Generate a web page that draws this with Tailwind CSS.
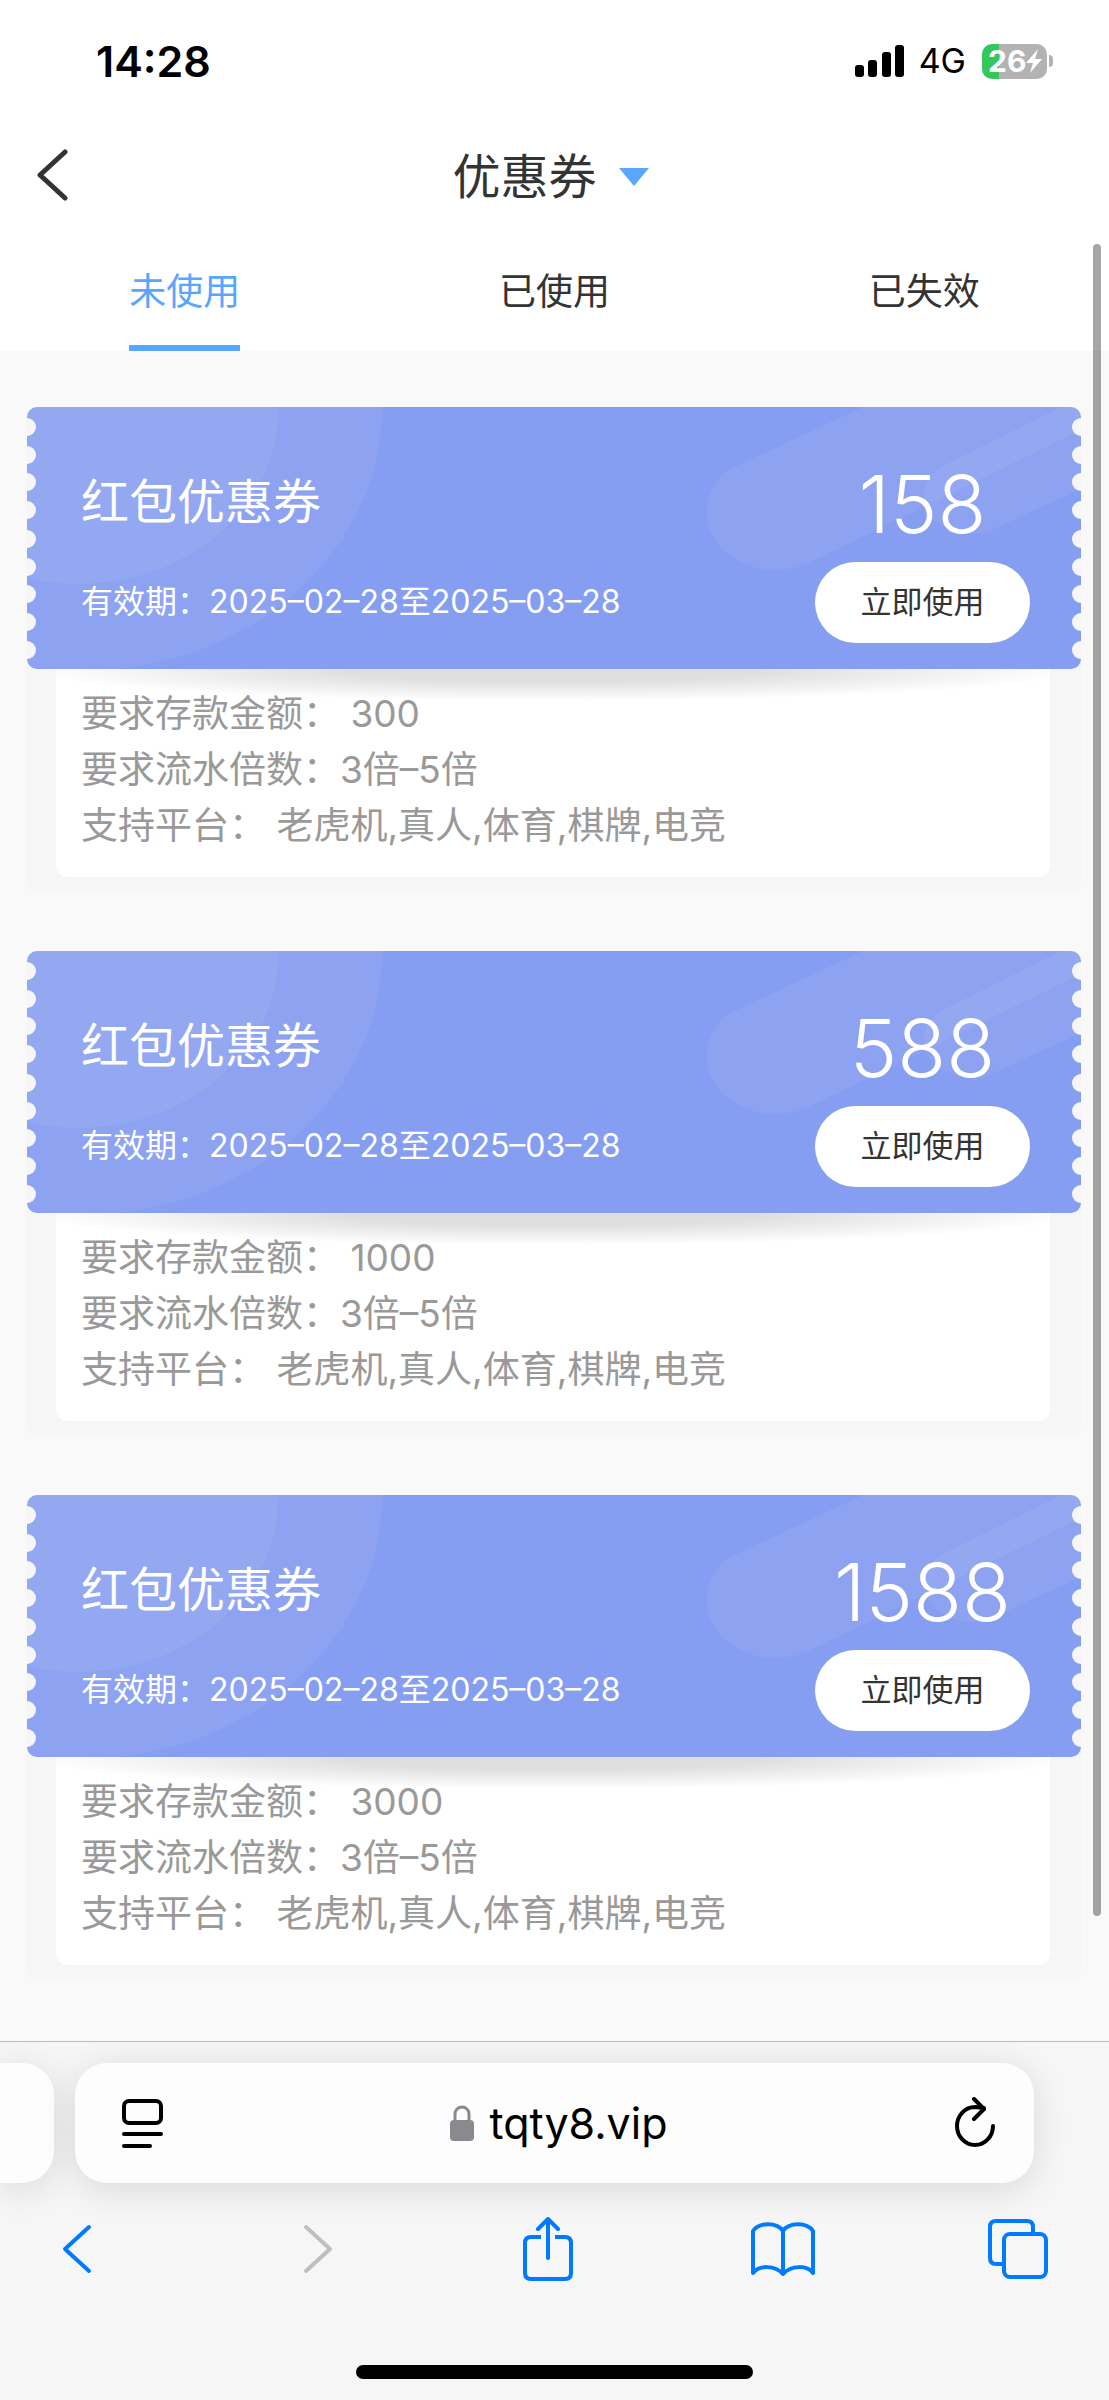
<!DOCTYPE html>
<html lang="zh-CN">
<head>
<meta charset="utf-8">
<meta name="viewport" content="width=device-width, initial-scale=1">
<title>优惠券</title>
<script src="https://cdn.jsdelivr.net/npm/@tailwindcss/browser@4"></script>
</head>
<body class="relative flex min-h-screen flex-col bg-[#f9f9f9] font-['Inter','Noto_Sans_CJK_SC',sans-serif] text-[#333]">

<!-- Shared ticket artwork -->
<svg class="absolute size-0" aria-hidden="true">
  <defs>
    <mask id="notches" maskUnits="userSpaceOnUse" x="0" y="0" width="1053" height="262">
      <rect width="1053" height="262" rx="10" fill="#fff"/>
      <g fill="#000">
        <circle cx="0" cy="20" r="9"/><circle cx="0" cy="48" r="9"/><circle cx="0" cy="75" r="9"/><circle cx="0" cy="103" r="9"/><circle cx="0" cy="132" r="9"/><circle cx="0" cy="160" r="9"/><circle cx="0" cy="187" r="9"/><circle cx="0" cy="215" r="9"/><circle cx="0" cy="243" r="9"/>
        <circle cx="1053" cy="20" r="9"/><circle cx="1053" cy="48" r="9"/><circle cx="1053" cy="75" r="9"/><circle cx="1053" cy="103" r="9"/><circle cx="1053" cy="132" r="9"/><circle cx="1053" cy="160" r="9"/><circle cx="1053" cy="187" r="9"/><circle cx="1053" cy="215" r="9"/><circle cx="1053" cy="243" r="9"/>
      </g>
    </mask>
    <symbol id="ticket" viewBox="0 0 1053 262" preserveAspectRatio="none">
      <g mask="url(#notches)">
        <rect width="1053" height="262" fill="#869ef1"/>
        <g fill="#fff" fill-opacity=".06">
          <ellipse cx="55" cy="0" rx="300" ry="264"/>
          <ellipse cx="50" cy="5" rx="201" ry="172"/>
          <path d="M835 0 705 61C690 68 679 85 679 106C679 138 712 163 747 163C762 163 775 159 783 155L1053 23V0Z"/>
          <path d="M1033 0 919 57C905 64 896 75 896 90C896 112 920 127 947 127C958 127 966 122 972 119L1053 82V0Z"/>
        </g>
      </g>
    </symbol>
  </defs>
</svg>

<header class="bg-white">
  <div class="flex h-[122px] items-center justify-between pr-14 pl-24">
    <time class="text-[43px] leading-none font-semibold text-black">14:28</time>
    <div class="flex items-center text-black">
      <svg class="h-8 w-[50px]" viewBox="0 0 50 32" fill="currentColor" aria-label="信号">
        <rect x="0" y="20" width="9" height="12" rx="3"/><rect x="13" y="15" width="9" height="17" rx="3"/><rect x="27" y="7" width="9" height="25" rx="3"/><rect x="40" y="0" width="9" height="32" rx="3"/>
      </svg>
      <span class="ml-[14px] text-[34px] leading-none">4G</span>
      <span class="relative ml-4 flex h-[35px] w-[65px] items-center overflow-hidden rounded-[10px] bg-linear-to-r from-[#34c759] from-26% to-[#b2b2b2] to-26% pl-[6px] text-[30px] leading-none font-bold text-white">26<svg class="h-6 w-4" viewBox="0 0 16 24" fill="currentColor"><path d="M12 0 0 14h7L4 24 16 10H9Z"/></svg></span>
      <span class="ml-[2px] h-3 w-1 rounded-r-full bg-[#b2b2b2]"></span>
    </div>
  </div>
  <div class="grid h-[110px] grid-cols-[1fr_auto_1fr] items-center px-9">
    <button type="button" aria-label="返回" class="mb-1 w-8">
      <svg class="h-[52px] w-8" viewBox="0 0 32 52" fill="none" stroke="#333" stroke-width="5" stroke-linecap="round" stroke-linejoin="round"><path d="M29 3 4 26l25 23"/></svg>
    </button>
    <button type="button" class="flex items-center gap-[22px] pr-2 text-[48px] leading-none">优惠券
      <svg class="h-[18px] w-[30px]" viewBox="0 0 30 18" fill="#58a6fe"><path d="M0 0h30L15 18Z"/></svg>
    </button>
  </div>
  <nav class="grid h-[119px] grid-cols-3 text-[37px]">
    <a href="#unused" class="flex items-stretch justify-center text-[#58a6fe]"><span class="flex items-center border-t-6 border-b-6 border-t-transparent border-b-[#58a6fe]">未使用</span></a>
    <a href="#used" class="flex items-center justify-center">已使用</a>
    <a href="#expired" class="flex items-center justify-center">已失效</a>
  </nav>
</header>

<main class="flex flex-1 flex-col gap-[60px] pt-14 pr-7 pb-[62px] pl-[27px]">

  <article class="rounded-lg bg-[#f6f6f6] pb-[14px]">
    <div class="relative flex h-[262px] justify-between pr-[51px] pl-[54px]">
      <svg class="absolute inset-0 size-full" aria-hidden="true"><use href="#ticket"/></svg>
      <div class="relative pt-[67px] text-white">
        <h2 class="text-[48px] leading-[56px]">红包优惠券</h2>
        <p class="mt-[52px] text-[32px] leading-10">有效期：2025–02–28至2025–03–28</p>
      </div>
      <div class="relative flex w-[215px] flex-col items-center pt-[57px]">
        <strong class="text-[80px] leading-[80px] font-light text-white">158</strong>
        <button type="button" class="mt-[18px] h-[81px] w-full flex-none rounded-full bg-white text-[31px]">立即使用</button>
      </div>
    </div>
    <div class="mr-[31px] ml-[29px] rounded-b-xl bg-white bg-[radial-gradient(53%_32px_at_50%_0,#dfdfdf_40%,#eeeeee_68%,#fff_100%)] pt-[17px] pb-[23px] pl-[25px] text-[37px] leading-14 text-[#999]">
      <p>要求存款金额： 300</p>
      <p>要求流水倍数：3倍–5倍</p>
      <p>支持平台： 老虎机,真人,体育,棋牌,电竞</p>
    </div>
  </article>

  <article class="rounded-lg bg-[#f6f6f6] pb-[14px]">
    <div class="relative flex h-[262px] justify-between pr-[51px] pl-[54px]">
      <svg class="absolute inset-0 size-full" aria-hidden="true"><use href="#ticket"/></svg>
      <div class="relative pt-[67px] text-white">
        <h2 class="text-[48px] leading-[56px]">红包优惠券</h2>
        <p class="mt-[52px] text-[32px] leading-10">有效期：2025–02–28至2025–03–28</p>
      </div>
      <div class="relative flex w-[215px] flex-col items-center pt-[57px]">
        <strong class="text-[80px] leading-[80px] font-light text-white">588</strong>
        <button type="button" class="mt-[18px] h-[81px] w-full flex-none rounded-full bg-white text-[31px]">立即使用</button>
      </div>
    </div>
    <div class="mr-[31px] ml-[29px] rounded-b-xl bg-white bg-[radial-gradient(53%_32px_at_50%_0,#dfdfdf_40%,#eeeeee_68%,#fff_100%)] pt-[17px] pb-[23px] pl-[25px] text-[37px] leading-14 text-[#999]">
      <p>要求存款金额： 1000</p>
      <p>要求流水倍数：3倍–5倍</p>
      <p>支持平台： 老虎机,真人,体育,棋牌,电竞</p>
    </div>
  </article>

  <article class="rounded-lg bg-[#f6f6f6] pb-[14px]">
    <div class="relative flex h-[262px] justify-between pr-[51px] pl-[54px]">
      <svg class="absolute inset-0 size-full" aria-hidden="true"><use href="#ticket"/></svg>
      <div class="relative pt-[67px] text-white">
        <h2 class="text-[48px] leading-[56px]">红包优惠券</h2>
        <p class="mt-[52px] text-[32px] leading-10">有效期：2025–02–28至2025–03–28</p>
      </div>
      <div class="relative flex w-[215px] flex-col items-center pt-[57px]">
        <strong class="text-[80px] leading-[80px] font-light text-white">1588</strong>
        <button type="button" class="mt-[18px] h-[81px] w-full flex-none rounded-full bg-white text-[31px]">立即使用</button>
      </div>
    </div>
    <div class="mr-[31px] ml-[29px] rounded-b-xl bg-white bg-[radial-gradient(53%_32px_at_50%_0,#dfdfdf_40%,#eeeeee_68%,#fff_100%)] pt-[17px] pb-[23px] pl-[25px] text-[37px] leading-14 text-[#999]">
      <p>要求存款金额： 3000</p>
      <p>要求流水倍数：3倍–5倍</p>
      <p>支持平台： 老虎机,真人,体育,棋牌,电竞</p>
    </div>
  </article>
</main>

<!-- Page scroll indicator -->
<div class="absolute top-[244px] right-2 bottom-[484px] w-2 rounded-full bg-black/35"></div>

<footer class="overflow-hidden border-t border-[#bcbcbc] bg-[#f6f6f7] pb-[21px]">
  <div class="flex gap-[21px] pt-[21px] pr-[75px]">
    <div class="h-[120px] w-[54px] flex-none rounded-r-[32px] bg-[#fdfdfd] shadow-[0_6px_36px_rgba(0,0,0,0.12)]"></div>
    <div class="flex h-[120px] flex-1 items-center justify-between rounded-[32px] bg-[#fdfdfd] pr-[38px] pl-[46px] text-black shadow-[0_6px_36px_rgba(0,0,0,0.12)]">
      <button type="button" aria-label="页面菜单">
        <svg class="h-[52px] w-[42px]" viewBox="0 0 42 52" fill="none" stroke="currentColor" stroke-width="4" stroke-linecap="round"><rect x="3" y="4" width="37" height="22" rx="5"/><path d="M3 37h37M3 49h26"/></svg>
      </button>
      <a href="#" class="flex items-center gap-4 text-[43px] leading-none">
        <svg class="h-9 w-6" viewBox="0 0 24 36"><rect y="15" width="24" height="21" rx="4" fill="#8a8a8e"/><path d="M5 16V9a7 7 0 0 1 14 0v7" fill="none" stroke="#8a8a8e" stroke-width="3"/></svg>tqty8.vip</a>
      <button type="button" aria-label="刷新">
        <svg class="h-[52px] w-[42px]" viewBox="0 0 42 52" fill="none" stroke="currentColor" stroke-width="4" stroke-linecap="round" stroke-linejoin="round"><path d="M39 29a18 19 0 1 1-18-19l9 1M20 2l10 10-10 10"/></svg>
      </button>
    </div>
  </div>
  <nav class="flex justify-between pt-[34px] pr-[59px] pl-[45px] text-[#007aff]">
    <button type="button" aria-label="后退" class="flex h-16 w-16 items-center justify-center">
      <svg class="h-[50px] w-[30px]" viewBox="0 0 30 50" fill="none" stroke="currentColor" stroke-width="4" stroke-linecap="round" stroke-linejoin="round"><path d="M27 3 3 25l24 22"/></svg>
    </button>
    <button type="button" aria-label="前进" disabled class="flex h-16 w-16 items-center justify-center pl-3 text-[#bfbfbf]">
      <svg class="h-[50px] w-[30px]" viewBox="0 0 30 50" fill="none" stroke="currentColor" stroke-width="4" stroke-linecap="round" stroke-linejoin="round"><path d="m3 3 24 22L3 47"/></svg>
    </button>
    <button type="button" aria-label="分享" class="flex h-16 w-16 items-center justify-center">
      <svg class="h-16 w-[52px]" viewBox="0 0 52 64" fill="none" stroke="currentColor" stroke-width="4" stroke-linejoin="round"><path d="M19 20H9q-6 0-6 6v30q0 6 6 6h34q6 0 6-6V26q0-6-6-6H33"/><path d="M26 41V3M16 12 26 2l10 10" stroke-linecap="round"/></svg>
    </button>
    <button type="button" aria-label="书签" class="flex h-16 w-16 items-center justify-center">
      <svg class="h-[54px] w-16" viewBox="0 0 64 54" fill="none" stroke="currentColor" stroke-width="4" stroke-linejoin="round" stroke-linecap="round"><path d="M32 9C26 0 8 0 2 9v42c6-8 22-8 30 1 8-9 24-9 30-1V9C56 0 38 0 32 9v43"/></svg>
    </button>
    <button type="button" aria-label="标签页" class="flex h-16 w-16 items-center justify-center">
      <svg class="h-[60px] w-[60px]" viewBox="0 0 60 60" fill="none" stroke="currentColor" stroke-width="4"><rect x="16" y="15" width="42" height="43" rx="6"/><path d="M14 45H8q-6 0-6-6V8q0-6 6-6h31q6 0 6 6v5"/></svg>
    </button>
  </nav>
  <div class="mx-auto mt-[84px] h-[14px] w-[397px] rounded-full bg-black"></div>
</footer>
</body>
</html>
